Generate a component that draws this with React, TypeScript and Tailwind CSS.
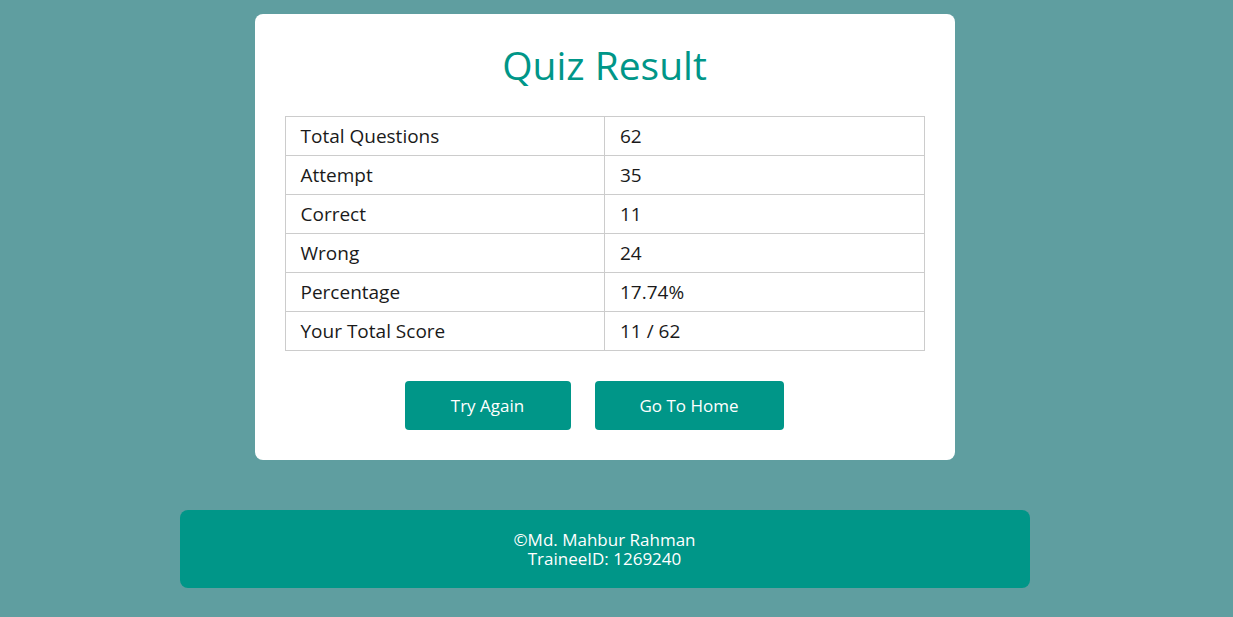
const rows: [string, string][] = [
  ['Total Questions', '62'],
  ['Attempt', '35'],
  ['Correct', '11'],
  ['Wrong', '24'],
  ['Percentage', '17.74%'],
  ['Your Total Score', '11 / 62'],
];

export default function App() {
  return (
    <div className="min-h-screen bg-[#5f9ea0] pr-[24px] pt-[14px] font-['Open_Sans',sans-serif]">
      <div className="mx-auto w-[700px] rounded-lg bg-white px-[30px] pb-[30px] pt-[29px]">
        <h1 className="h-[73px] text-center text-[39px] leading-[44px] text-[#009688]">Quiz Result</h1>
        <table className="w-full border-collapse text-[19px] text-[#1a1a1a]">
          <tbody>
            {rows.map(([label, value]) => (
              <tr key={label} className="h-[39px]">
                <td className="w-1/2 border border-[#cccccc] px-[15px] py-0">{label}</td>
                <td className="w-1/2 border border-[#cccccc] px-[15px] py-0">{value}</td>
              </tr>
            ))}
          </tbody>
        </table>
        <div className="mt-[30px] flex justify-center gap-6 pr-[21px]">
          <button className="h-[49px] w-[166px] rounded bg-[#009688] text-[17px] text-white">Try Again</button>
          <button className="h-[49px] w-[189px] rounded bg-[#009688] text-[17px] text-white">Go To Home</button>
        </div>
      </div>
      <footer className="mx-auto mt-[50px] flex h-[78px] w-[850px] flex-col items-center justify-center gap-0 rounded-lg bg-[#009688] text-[17px] leading-[19px] text-white">
        <span>©Md. Mahbur Rahman</span>
        <span>TraineeID: 1269240</span>
      </footer>
    </div>
  );
}
